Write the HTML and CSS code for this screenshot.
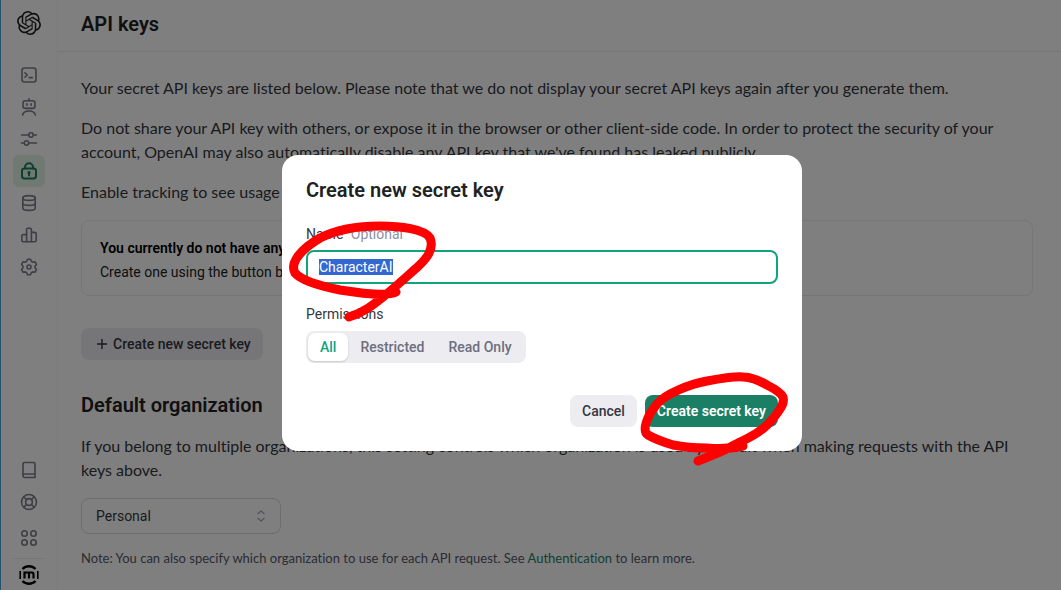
FILE: index.html
```html
<!DOCTYPE html>
<html lang="en">
<head>
<meta charset="utf-8">
<title>API keys</title>
<link rel="stylesheet" href="styles.css">
</head>
<body>
<div class="app">
  <nav class="sidebar" aria-label="Main">
    <a class="brand" href="#" aria-label="OpenAI">
      <svg width="24" height="24" viewBox="0 0 24 24" fill="currentColor"><path d="M22.2819 9.8211a5.9847 5.9847 0 0 0-.5157-4.9108 6.0462 6.0462 0 0 0-6.5098-2.9A6.0651 6.0651 0 0 0 4.9807 4.1818a5.9847 5.9847 0 0 0-3.9977 2.9 6.0462 6.0462 0 0 0 .7427 7.0966 5.98 5.98 0 0 0 .511 4.9107 6.051 6.051 0 0 0 6.5146 2.9001A5.9847 5.9847 0 0 0 13.2599 24a6.0557 6.0557 0 0 0 5.7718-4.2058 5.9894 5.9894 0 0 0 3.9977-2.9001 6.0557 6.0557 0 0 0-.7475-7.0729zm-9.022 12.6081a4.4755 4.4755 0 0 1-2.8764-1.0408l.1419-.0804 4.7783-2.7582a.7948.7948 0 0 0 .3927-.6813v-6.7369l2.02 1.1686a.071.071 0 0 1 .038.052v5.5826a4.504 4.504 0 0 1-4.4945 4.4944zm-9.6607-4.1254a4.4708 4.4708 0 0 1-.5346-3.0137l.142.0852 4.783 2.7582a.7712.7712 0 0 0 .7806 0l5.8428-3.3685v2.3324a.0804.0804 0 0 1-.0332.0615L9.74 19.9502a4.4992 4.4992 0 0 1-6.1408-1.6464zM2.3408 7.8956a4.485 4.485 0 0 1 2.3655-1.9728V11.6a.7664.7664 0 0 0 .3879.6765l5.8144 3.3543-2.0201 1.1685a.0757.0757 0 0 1-.071 0l-4.8303-2.7865A4.504 4.504 0 0 1 2.3408 7.872zm16.5963 3.8558L13.1038 8.364 15.1192 7.2a.0757.0757 0 0 1 .071 0l4.8303 2.7913a4.4944 4.4944 0 0 1-.6765 8.1042v-5.6772a.79.79 0 0 0-.407-.667zm2.0107-3.0231l-.142-.0852-4.7735-2.7818a.7759.7759 0 0 0-.7854 0L9.409 9.2297V6.8974a.0662.0662 0 0 1 .0284-.0615l4.8303-2.7866a4.4992 4.4992 0 0 1 6.6802 4.66zM8.3065 12.863l-2.02-1.1638a.0804.0804 0 0 1-.038-.0567V6.0742a4.4992 4.4992 0 0 1 7.3757-3.4537l-.142.0805L8.704 5.459a.7948.7948 0 0 0-.3927.6813zm1.0976-2.3654l2.602-1.4998 2.6069 1.4998v2.9994l-2.5974 1.4997-2.6067-1.4997Z"/></svg>
    </a>
    <div class="nav-group">
      <a class="nav-item" href="#" aria-label="Playground">
        <svg class="icon" viewBox="0 0 18 18"><rect x="2" y="2" width="14" height="14" rx="2.5"/><path d="M5 6.8l2.3 2.2L5 11.2M9.2 11.6h3.2"/></svg>
      </a>
      <a class="nav-item" href="#" aria-label="Assistants">
        <svg class="icon" viewBox="0 0 18 18"><path d="M9 .8v2"/><rect x="3" y="2.8" width="12" height="7.6" rx="2.4"/><path d="M6.900 5.800v1.400M11.100 5.800v1.400M2.600 17c.6-2.600 3.200-4 6.400-4s5.800 1.400 6.400 4"/></svg>
      </a>
      <a class="nav-item" href="#" aria-label="Fine-tuning">
        <svg class="icon" viewBox="0 0 18 18"><path d="M1.500 5h7.300M13.200 5h3.300M1.500 13h2.800M8.700 13h7.800"/><circle cx="11" cy="5" r="2.200"/><circle cx="6.500" cy="13" r="2.200"/></svg>
      </a>
      <a class="nav-item nav-item-active" href="#" aria-label="API keys" aria-current="page">
        <svg class="icon icon-bold" viewBox="0 0 18 18"><rect x="2" y="6.500" width="14" height="10" rx="2.400"/><path d="M5 6.500V5.300a4 4 0 0 1 8 0v1.200M9 11v2.400"/><circle cx="9" cy="10.600" r=".7"/></svg>
      </a>
      <a class="nav-item" href="#" aria-label="Files">
        <svg class="icon" viewBox="0 0 18 18"><ellipse cx="9" cy="4" rx="6.200" ry="2.400"/><path d="M2.800 4v10c0 1.300 2.800 2.400 6.200 2.400s6.200-1.100 6.200-2.400V4M2.800 9c0 1.300 2.800 2.400 6.200 2.400s6.200-1.100 6.200-2.400"/></svg>
      </a>
      <a class="nav-item" href="#" aria-label="Usage">
        <svg class="icon" viewBox="0 0 18 18"><path d="M6.600 15.800H3.400a1.600 1.600 0 0 1-1.600-1.600V10a1.400 1.400 0 0 1 1.400-1.400h3.400M6.600 15.800V3.600A1.400 1.400 0 0 1 8 2.200h2a1.400 1.400 0 0 1 1.400 1.400v12.200zM11.400 6.400h3.400a1.400 1.400 0 0 1 1.400 1.400v6.400a1.600 1.600 0 0 1-1.600 1.600h-3.200"/></svg>
      </a>
      <a class="nav-item" href="#" aria-label="Settings">
        <svg class="icon" viewBox="0 0 18 18"><path d="M7.500 1.200h3l.8 2 1.500.9 2.200-.3 1.500 2.600-1.400 1.700v1.800l1.400 1.700-1.500 2.600-2.200-.3-1.500.9-.8 2h-3l-.8-2-1.500-.9-2.200.3-1.500-2.600 1.400-1.700V8.100L1.500 6.400 3 3.800l2.200.3 1.500-.9z"/><circle cx="9" cy="9" r="2"/></svg>
      </a>
    </div>
    <div class="nav-footer">
      <a class="nav-item" href="#" aria-label="Documentation">
        <svg class="icon" viewBox="0 0 18 18"><path d="M15 13H4.600A1.700 1.700 0 0 0 3 14.700V3a1.500 1.500 0 0 1 1.500-1.500h9A1.500 1.500 0 0 1 15 3v13.500H4.700A1.700 1.700 0 0 1 3 14.800"/></svg>
      </a>
      <a class="nav-item" href="#" aria-label="Help">
        <svg class="icon" viewBox="0 0 18 18"><circle cx="9" cy="9" r="7.500"/><circle cx="9" cy="9" r="3.400"/><path d="M3.700 3.700l2.900 2.900M14.300 3.700l-2.900 2.900M3.700 14.300l2.900-2.900M14.300 14.300l-2.900-2.900"/></svg>
      </a>
      <a class="nav-item" href="#" aria-label="All products">
        <svg class="icon" viewBox="0 0 18 18"><circle cx="4.500" cy="4.500" r="2.700"/><circle cx="13.500" cy="4.500" r="2.700"/><circle cx="4.500" cy="13.500" r="2.700"/><circle cx="13.500" cy="13.500" r="2.700"/></svg>
      </a>
      <a class="account" href="#" aria-label="Account">
        <svg width="20" height="20" viewBox="0 0 20 20"><circle cx="10" cy="10" r="9.800" fill="#fff"/><path d="M3.500 4a9 9 0 0 1 13 0M3.500 16a9 9 0 0 0 13 0" fill="none" stroke="#000" stroke-width="2.400"/><path d="M1.200 6v8M18.800 6v8" stroke="#000" stroke-width="1.600"/><path d="M5.500 13.500V7.500h7.600a1.400 1.400 0 0 1 1.400 1.400v4.600M10 7.500v6" fill="none" stroke="#000" stroke-width="2.200"/></svg>
      </a>
    </div>
  </nav>

  <main class="main">
    <header class="topbar"><h1 class="title">API keys</h1></header>
    <div class="content">
      <p class="text">Your secret API keys are listed below. Please note that we do not display your secret API keys again after you generate them.</p>
      <p class="text">Do not share your API key with others, or expose it in the browser or other client-side code. In order to protect the security of your account, OpenAI may also automatically disable any API key that we've found has leaked publicly.</p>
      <p class="text">Enable tracking to see usage</p>
      <section class="empty">
        <strong class="empty-title">You currently do not have any API keys</strong>
        <p class="empty-text">Create one using the button below to get started</p>
      </section>
      <button class="button create" type="button">
        <svg class="plus" width="12" height="12" viewBox="0 0 12 12"><path d="M6 1v10M1 6h10"/></svg>
        Create new secret key
      </button>
      <h2 class="title subtitle"><label for="org">Default organization</label></h2>
      <p class="text">If you belong to multiple organizations, this setting controls which organization is used by default when making requests with the API keys above.</p>
      <div class="select-wrap">
        <select class="select" id="org"><option>Personal</option></select>
        <svg class="chevrons" width="10" height="12" viewBox="0 0 10 12"><path d="M1.500 4L5 1l3.500 3M1.500 8L5 11l3.500-3"/></svg>
      </div>
      <p class="note">Note: You can also specify which organization to use for each API request. See <a class="link" href="#">Authentication</a> to learn more.</p>
    </div>
  </main>
</div>

<div class="overlay">
  <form class="modal" role="dialog" aria-labelledby="modal-title">
    <h2 class="title" id="modal-title">Create new secret key</h2>
    <div class="field">
      <label class="label" for="key-name">Name <span class="optional">Optional</span></label>
      <input class="input" id="key-name" type="text" value="CharacterAI" autocomplete="off" spellcheck="false">
    </div>
    <fieldset class="permissions">
      <legend class="label">Permissions</legend>
      <div class="segments">
        <label class="segment"><input class="radio" type="radio" name="permissions" checked>All</label>
        <label class="segment"><input class="radio" type="radio" name="permissions">Restricted</label>
        <label class="segment"><input class="radio" type="radio" name="permissions">Read Only</label>
      </div>
    </fieldset>
    <div class="actions">
      <button class="button" type="button">Cancel</button>
      <button class="button button-primary" type="submit">Create secret key</button>
    </div>
  </form>
</div>

<svg class="marks" width="1061" height="590" viewBox="0 0 1061 590" aria-hidden="true">
  <path d="M396 292C388 296 365 294 340 290C320 286 302 281 295 273C289 262 303 248 320 238C340 228 362 226 380 226C400 226 425 229 430 238C435 250 425 261 413 271C403 280 393 289 383 297C373 305 363 313 349 317"/>
  <path d="M743 446C730 449 719 449 707 448C694 448 683 447 673 445C663 442 655 439 648 435C642 431 646 417 657 404C665 394 690 384 707 381C718 379 735 376 743 377C752 377 760 381 767 385C775 389 781 393 783 397C784 401 783 405 780 409C777 414 772 420 767 425C759 433 749 438 740 442C733 446 726 449 720 452L698 461"/>
</svg>
<script src="app.js"></script>
</body>
</html>
```
FILE: styles.css
```css
* { box-sizing: border-box; }

body {
  margin: 0;
  background: #fff;
  color: #202123;
  font: 14px/24px Roboto, "Liberation Sans", sans-serif;
}

h1, h2, p, fieldset { margin: 0; padding: 0; border: 0; }
button, input, select { font: inherit; color: inherit; }

.app {
  display: flex;
  height: 100vh;
  overflow: hidden;
  border-left: 1px solid #4aa5dc;
}

.sidebar {
  display: flex;
  flex-direction: column;
  flex: none;
  width: 57px;
  padding: 11px 12px 3px;
  border-right: 1px solid #f7f7f8;
}

.brand, .account {
  display: grid;
  place-items: center;
  color: #202123;
}

.nav-group { margin-top: 24px; }

.nav-item {
  display: grid;
  place-items: center;
  height: 32px;
  border-radius: 6px;
  color: #7c7c8a;
}

.nav-item-active {
  background: #e3f3e6;
  color: #1a7f64;
}

.nav-footer { margin-top: auto; }
.nav-footer .nav-item:nth-child(3) { margin-top: 4px; }

.account {
  margin-top: 4px;
  padding-top: 6px;
  padding-bottom: 2px;
  border-top: 1px solid #ececf1;
}

.icon {
  width: 18px;
  height: 18px;
  fill: none;
  stroke: currentColor;
  stroke-width: 1.6;
  stroke-linecap: round;
  stroke-linejoin: round;
}

.icon-bold { stroke-width: 2; }

.main {
  flex: 1;
  min-width: 0;
}

.topbar {
  padding: 12px 23px 15px;
  border-bottom: 1px solid #ececf1;
}

.title {
  font-size: 20px;
  font-weight: 600;
  line-height: 24px;
}

.content { padding: 24px 28px 0 23px; }

.text {
  margin-bottom: 16px;
  color: #353740;
  font: 16px/24px Lato, sans-serif;
  font-variant-ligatures: none;
}

.empty {
  margin-bottom: 32px;
  padding: 15px 18px 11px;
  border: 1px solid #ececf1;
  border-radius: 8px;
}

.empty-title {
  font-weight: 600;
  color: #000;
}

.button {
  height: 32px;
  padding: 0 12px;
  border: 0;
  border-radius: 8px;
  background: #ececf1;
  color: #353740;
  font-weight: 500;
}

.button-primary {
  background: #1a7f64;
  color: #fff;
  font-weight: 600;
}

.create {
  display: flex;
  align-items: center;
  gap: 5px;
  padding-left: 15px;
}

.plus, .chevrons {
  fill: none;
  stroke: currentColor;
  stroke-width: 1.4;
}

.subtitle { margin: 33px 0 17px; }

.select-wrap {
  display: grid;
  align-items: center;
  width: 200px;
}

.select, .chevrons { grid-area: 1 / 1; }

.select {
  height: 36px;
  padding: 0 14px;
  border: 1px solid #d9d9e3;
  border-radius: 8px;
  background: none;
  appearance: none;
  color: #353740;
}

.chevrons {
  justify-self: end;
  margin-right: 15px;
  color: #acacbe;
  pointer-events: none;
}

.note {
  margin-top: 12px;
  color: #565869;
  font: 13px/24px Lato, sans-serif;
  font-variant-ligatures: none;
}

.link {
  color: #1a7f64;
  text-decoration: none;
}

.overlay {
  position: fixed;
  inset: 0;
  display: grid;
  place-items: center;
  padding: 16px 0 0 23px;
  background: rgba(0, 0, 0, 0.5);
}

.modal {
  width: 520px;
  max-width: 100%;
  padding: 23px 24px 24px;
  border-radius: 16px;
  background: #fff;
}

.field { margin-top: 20px; }

.label {
  display: block;
  padding: 0;
  color: #353740;
}

.optional {
  margin-left: 4px;
  color: #8e8ea0;
}

.input {
  display: block;
  width: 100%;
  height: 34px;
  margin-top: 4px;
  padding: 0 11px;
  border: 2px solid #10a37f;
  border-radius: 8px;
  outline: 0;
}

.input::selection {
  background: #3367d1;
  color: #fff;
}

.permissions { margin-top: 18px; }

.segments {
  display: inline-flex;
  margin-top: 5px;
  padding: 2px;
  border-radius: 8px;
  background: #ececf1;
  vertical-align: top;
}

.segment {
  padding: 2px 12px;
  border-radius: 7px;
  color: #6e6e80;
  font-weight: 500;
}

.segment:has(:checked) {
  background: #fff;
  color: #10a37f;
  box-shadow: 0 1px 2px rgba(0, 0, 0, 0.15);
}

.radio {
  position: absolute;
  opacity: 0;
}

.actions {
  display: flex;
  justify-content: flex-end;
  gap: 8px;
  margin-top: 32px;
}

.marks {
  position: absolute;
  top: 0;
  left: 0;
  pointer-events: none;
  fill: none;
  stroke: #fe0000;
  stroke-width: 9;
  stroke-linecap: round;
  stroke-linejoin: round;
}
```
FILE: app.js
```javascript
const keyName = document.getElementById('key-name');
keyName.focus();
keyName.select();
```
